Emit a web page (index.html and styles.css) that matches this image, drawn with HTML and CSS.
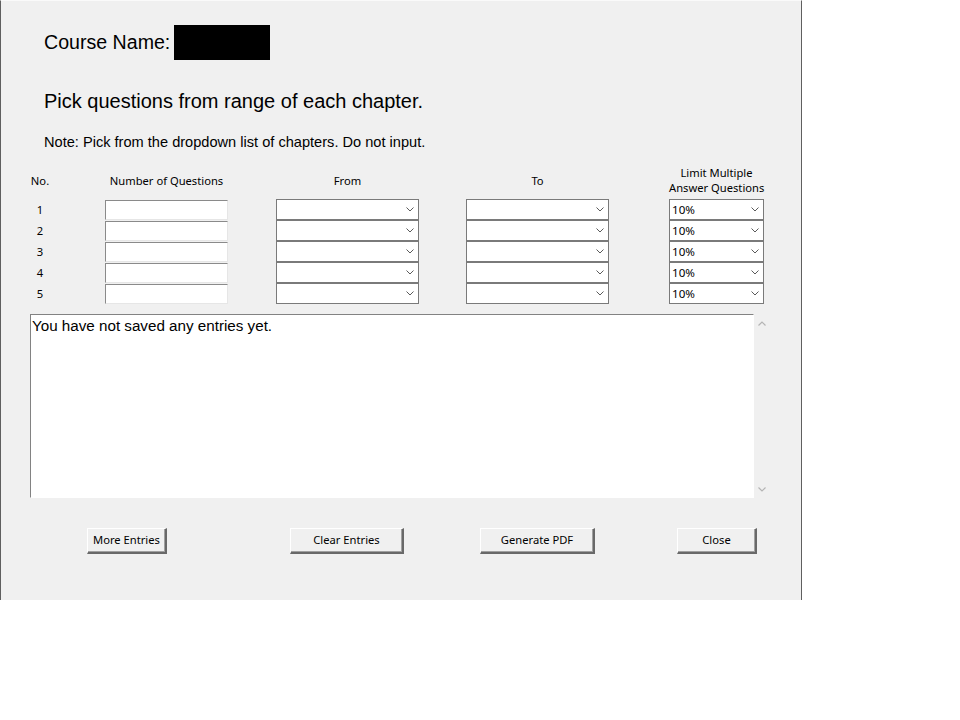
FILE: index.html
```html
<!DOCTYPE html>
<html>
<head>
<meta charset="utf-8">
<link rel="stylesheet" href="styles.css">
</head>
<body>
<div class="window">
  <div class="course-row">
    <span class="course-label">Course Name:</span>
    <span class="redact"></span>
  </div>
  <h1 class="title">Pick questions from range of each chapter.</h1>
  <p class="note">Note: Pick from the dropdown list of chapters. Do not input.</p>

  <div class="table">
    <div class="row head">
      <div class="c-no">No.</div>
      <div class="c-num">Number of Questions</div>
      <div class="c-from">From</div>
      <div class="c-to">To</div>
      <div class="c-lim"><div>Limit Multiple</div><div>Answer Questions</div></div>
    </div>
    <div class="row">
      <div class="c-no">1</div>
      <div class="c-num"><div class="entry"></div></div>
      <div class="c-from"><div class="combo"><span class="val"></span><svg class="chev" width="8" height="5" viewBox="0 0 8 5"><polyline points="0.5,0.5 4,4 7.5,0.5" fill="none" stroke="#5a5a5a" stroke-width="1"/></svg></div></div>
      <div class="c-to"><div class="combo"><span class="val"></span><svg class="chev" width="8" height="5" viewBox="0 0 8 5"><polyline points="0.5,0.5 4,4 7.5,0.5" fill="none" stroke="#5a5a5a" stroke-width="1"/></svg></div></div>
      <div class="c-lim"><div class="combo"><span class="val">10%</span><svg class="chev" width="8" height="5" viewBox="0 0 8 5"><polyline points="0.5,0.5 4,4 7.5,0.5" fill="none" stroke="#5a5a5a" stroke-width="1"/></svg></div></div>
    </div>
    <div class="row">
      <div class="c-no">2</div>
      <div class="c-num"><div class="entry"></div></div>
      <div class="c-from"><div class="combo"><span class="val"></span><svg class="chev" width="8" height="5" viewBox="0 0 8 5"><polyline points="0.5,0.5 4,4 7.5,0.5" fill="none" stroke="#5a5a5a" stroke-width="1"/></svg></div></div>
      <div class="c-to"><div class="combo"><span class="val"></span><svg class="chev" width="8" height="5" viewBox="0 0 8 5"><polyline points="0.5,0.5 4,4 7.5,0.5" fill="none" stroke="#5a5a5a" stroke-width="1"/></svg></div></div>
      <div class="c-lim"><div class="combo"><span class="val">10%</span><svg class="chev" width="8" height="5" viewBox="0 0 8 5"><polyline points="0.5,0.5 4,4 7.5,0.5" fill="none" stroke="#5a5a5a" stroke-width="1"/></svg></div></div>
    </div>
    <div class="row">
      <div class="c-no">3</div>
      <div class="c-num"><div class="entry"></div></div>
      <div class="c-from"><div class="combo"><span class="val"></span><svg class="chev" width="8" height="5" viewBox="0 0 8 5"><polyline points="0.5,0.5 4,4 7.5,0.5" fill="none" stroke="#5a5a5a" stroke-width="1"/></svg></div></div>
      <div class="c-to"><div class="combo"><span class="val"></span><svg class="chev" width="8" height="5" viewBox="0 0 8 5"><polyline points="0.5,0.5 4,4 7.5,0.5" fill="none" stroke="#5a5a5a" stroke-width="1"/></svg></div></div>
      <div class="c-lim"><div class="combo"><span class="val">10%</span><svg class="chev" width="8" height="5" viewBox="0 0 8 5"><polyline points="0.5,0.5 4,4 7.5,0.5" fill="none" stroke="#5a5a5a" stroke-width="1"/></svg></div></div>
    </div>
    <div class="row">
      <div class="c-no">4</div>
      <div class="c-num"><div class="entry"></div></div>
      <div class="c-from"><div class="combo"><span class="val"></span><svg class="chev" width="8" height="5" viewBox="0 0 8 5"><polyline points="0.5,0.5 4,4 7.5,0.5" fill="none" stroke="#5a5a5a" stroke-width="1"/></svg></div></div>
      <div class="c-to"><div class="combo"><span class="val"></span><svg class="chev" width="8" height="5" viewBox="0 0 8 5"><polyline points="0.5,0.5 4,4 7.5,0.5" fill="none" stroke="#5a5a5a" stroke-width="1"/></svg></div></div>
      <div class="c-lim"><div class="combo"><span class="val">10%</span><svg class="chev" width="8" height="5" viewBox="0 0 8 5"><polyline points="0.5,0.5 4,4 7.5,0.5" fill="none" stroke="#5a5a5a" stroke-width="1"/></svg></div></div>
    </div>
    <div class="row">
      <div class="c-no">5</div>
      <div class="c-num"><div class="entry"></div></div>
      <div class="c-from"><div class="combo"><span class="val"></span><svg class="chev" width="8" height="5" viewBox="0 0 8 5"><polyline points="0.5,0.5 4,4 7.5,0.5" fill="none" stroke="#5a5a5a" stroke-width="1"/></svg></div></div>
      <div class="c-to"><div class="combo"><span class="val"></span><svg class="chev" width="8" height="5" viewBox="0 0 8 5"><polyline points="0.5,0.5 4,4 7.5,0.5" fill="none" stroke="#5a5a5a" stroke-width="1"/></svg></div></div>
      <div class="c-lim"><div class="combo"><span class="val">10%</span><svg class="chev" width="8" height="5" viewBox="0 0 8 5"><polyline points="0.5,0.5 4,4 7.5,0.5" fill="none" stroke="#5a5a5a" stroke-width="1"/></svg></div></div>
    </div>
  </div>

  <div class="log">
    <div class="log-box">You have not saved any entries yet.</div>
    <div class="scroll">
      <svg width="8" height="5" viewBox="0 0 8 5"><polyline points="0.5,4.5 4,1 7.5,4.5" fill="none" stroke="#b4b4b4" stroke-width="1.2"/></svg>
      <svg width="8" height="5" viewBox="0 0 8 5"><polyline points="0.5,0.5 4,4 7.5,0.5" fill="none" stroke="#b4b4b4" stroke-width="1.2"/></svg>
    </div>
  </div>

  <div class="buttons">
    <button class="btn btn-more">More Entries</button>
    <button class="btn btn-clear">Clear Entries</button>
    <button class="btn btn-pdf">Generate PDF</button>
    <button class="btn btn-close">Close</button>
  </div>
</div>
</body>
</html>
```

FILE: styles.css
```css
html, body {
  margin: 0;
  padding: 0;
  background: #ffffff;
}

.window {
  box-sizing: border-box;
  width: 802px;
  height: 600px;
  background: #f0f0f0;
  border-left: 1px solid #5f5f5f;
  border-right: 1px solid #5f5f5f;
  border-top: 1px solid #fafafa;
  font-family: "Liberation Sans", Arial, sans-serif;
  color: #000;
}

.course-row {
  display: flex;
  align-items: center;
  padding: 24px 0 0 43px;
}

.course-label {
  font-size: 19.6px;
  line-height: 23px;
}

.redact {
  display: block;
  width: 96px;
  height: 35px;
  margin-left: 4px;
  background: #000;
}

.title {
  margin: 30px 0 0 43px;
  font-size: 20px;
  line-height: 23px;
  font-weight: normal;
}

.note {
  margin: 20px 0 0 43px;
  font-size: 14.6px;
  line-height: 18px;
}

.table {
  margin: 15px 0 0 29px;
  font-family: "Segoe UI", "Noto Sans", sans-serif;
  font-size: 11.2px;
}

.row {
  display: flex;
  align-items: center;
  height: 21px;
}

.row.head {
  box-sizing: border-box;
  height: 30px;
  padding-bottom: 2px;
  line-height: 15px;
  margin-bottom: 3px;
}

.c-no {
  width: 20px;
  text-align: center;
}

.c-num {
  width: 123px;
  margin-left: 55px;
  text-align: center;
  white-space: nowrap;
}

.c-from {
  width: 143px;
  margin-left: 48px;
  text-align: center;
}

.c-to {
  width: 143px;
  margin-left: 47px;
  text-align: center;
}

.c-lim {
  width: 95px;
  margin-left: 60px;
  text-align: center;
  white-space: nowrap;
}

.entry {
  box-sizing: border-box;
  height: 20px;
  margin-top: 1px;
  background: #fff;
  border-top: 1px solid #8a8a8a;
  border-left: 1px solid #8a8a8a;
  border-right: 1px solid #e6e6e6;
  border-bottom: 1px solid #e6e6e6;
}

.combo {
  box-sizing: border-box;
  height: 21px;
  display: flex;
  align-items: center;
  justify-content: space-between;
  background: #fff;
  border: 1px solid #7a7a7a;
  padding: 0 4px 0 2px;
  text-align: left;
}

.val {
  line-height: 16px;
  font-size: 11.6px;
}

.chev {
  display: block;
}

.log {
  display: flex;
  margin: 10px 0 0 29px;
  height: 184px;
}

.log-box {
  box-sizing: border-box;
  width: 724px;
  height: 184px;
  background: #fff;
  border-top: 1px solid #828282;
  border-left: 1px solid #828282;
  border-right: 1px solid #ffffff;
  border-bottom: 1px solid #ffffff;
  padding: 2px 1px;
  font-size: 15.2px;
  line-height: 18px;
}

.scroll {
  width: 16px;
  display: flex;
  flex-direction: column;
  align-items: center;
  justify-content: space-between;
  padding: 7px 0 6px;
  box-sizing: border-box;
}

.scroll svg {
  display: block;
}

.buttons {
  display: flex;
  margin-top: 30px;
}

.btn {
  box-sizing: border-box;
  height: 26px;
  padding: 0 0 2px;
  background: #f0f0f0;
  font-family: "Segoe UI", "Noto Sans", sans-serif;
  font-size: 11.2px;
  color: #000;
  border-style: solid;
  border-width: 1px 2px 2px 1px;
  border-color: #ffffff #696969 #696969 #ffffff;
  box-shadow: inset -1px -1px 0 #a0a0a0;
}

.btn-more {
  width: 80px;
  margin-left: 86px;
}

.btn-clear {
  width: 114px;
  margin-left: 123px;
}

.btn-pdf {
  width: 115px;
  margin-left: 76px;
}

.btn-close {
  width: 80px;
  margin-left: 82px;
}
```
